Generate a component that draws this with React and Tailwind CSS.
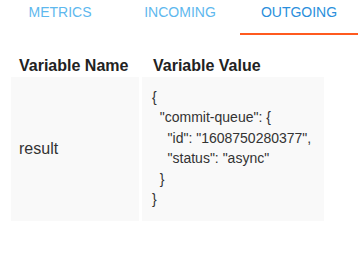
const tabs = [
  { label: "METRICS", active: false },
  { label: "INCOMING", active: false },
  { label: "OUTGOING", active: true },
];

const value = `{
  "commit-queue": {
    "id": "1608750280377",
    "status": "async"
  }
}`;

const App = () => {
  return (
    <div className="w-[358px] h-[253px] bg-white font-['Liberation_Sans',Arial,sans-serif]">
      <div className="flex">
        {tabs.map((tab) => (
          <div
            key={tab.label}
            className={`flex flex-col items-center h-[35px] ${
              tab.active ? "w-[118px]" : "w-[120px]"
            }`}
          >
            <span
              className={`pt-[4px] text-[14px] leading-[16px] ${
                tab.active ? "text-[#2a8fdc]" : "text-[#5eb8ee]"
              }`}
            >
              {tab.label}
            </span>
            <div className="flex-1" />
            <div
              className={`h-[2px] w-full ${tab.active ? "bg-[#ff5a1f]" : ""}`}
            />
          </div>
        ))}
      </div>

      <div className="ml-[11px] mt-[22px] w-[313px]">
        <div className="flex text-[16px] font-bold leading-[18px] text-[#222]">
          <div className="w-[128px] pl-[8px]">Variable Name</div>
          <div className="pl-[14px]">Variable Value</div>
        </div>
        <div className="mt-[2px] flex gap-[3px]">
          <div className="w-[128px] flex items-center bg-[#f9f9f9] pl-[8px] text-[16px] text-[#333]">
            result
          </div>
          <pre className="flex-1 bg-[#f9f9f9] pt-[10px] pb-[12px] pl-[10px] text-[14px] leading-[20.4px] text-[#333] font-['Liberation_Sans',Arial,sans-serif]">
            {value}
          </pre>
        </div>
      </div>
    </div>
  );
};

export default App;
